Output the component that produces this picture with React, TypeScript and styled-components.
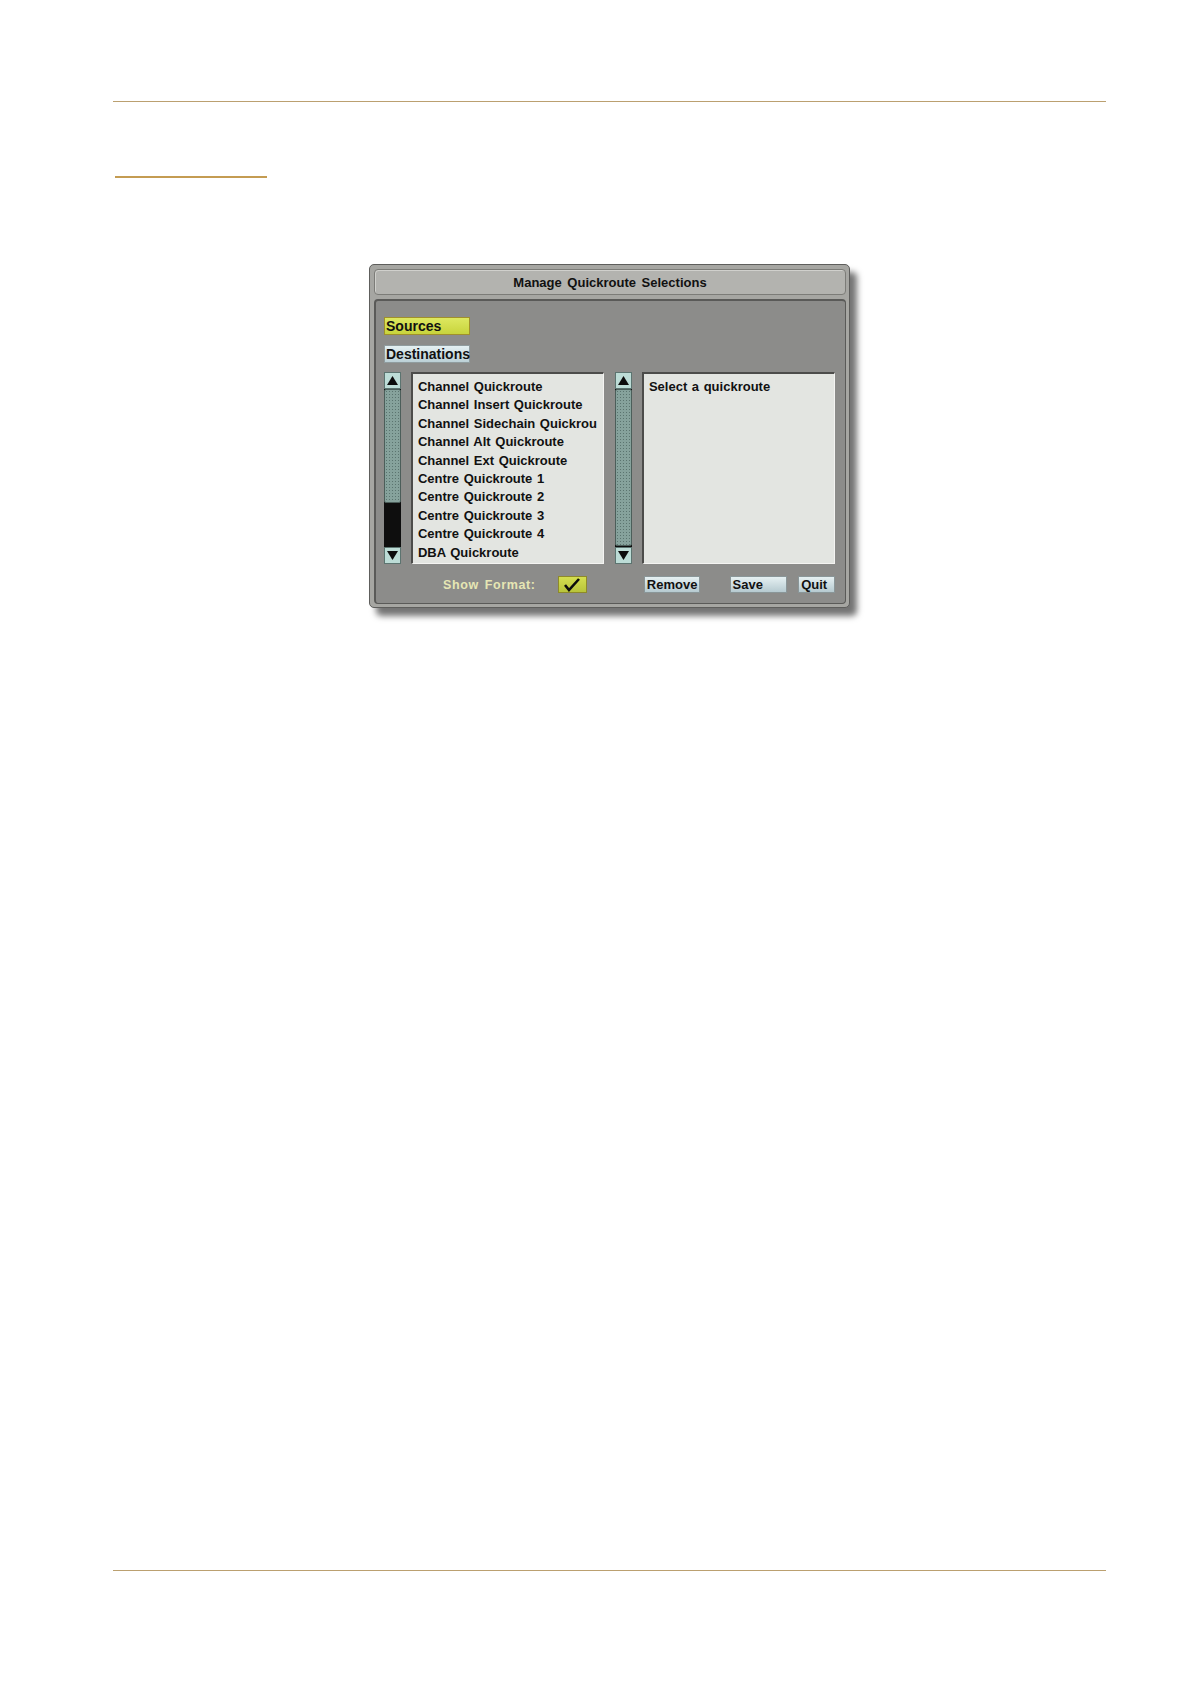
import React from "react"
import styled, { createGlobalStyle, css } from "styled-components"

const Global = createGlobalStyle`
    html, body {
        margin: 0;
        padding: 0;
        background: #ffffff;
    }
    body {
        font-family: "Liberation Sans", Arial, sans-serif;
    }
`

const Page = styled.div`
    width: 1191px;
    height: 1684px;
    box-sizing: border-box;
    padding: 101px 85px 113px 113px;
    display: flex;
    flex-direction: column;
`

const Rule = styled.div<{ $bottom?: boolean }>`
    height: 1px;
    background: #bba070;
    margin-top: ${(p) => (p.$bottom ? "auto" : "0")};
`

const SectionRule = styled.div`
    width: 152px;
    height: 2px;
    margin: 74px 0 0 2px;
    background: #c49c52;
`

const Dialog = styled.div`
    align-self: center;
    margin-top: 86px;
    width: 481px;
    height: 344px;
    box-sizing: border-box;
    padding: 4px 3px 3px 4px;
    background: #a6a6a2;
    border: 1px solid #5e5e5c;
    border-radius: 5px;
    box-shadow: 7px 8px 6px rgba(0, 0, 0, 0.55);
    display: flex;
    flex-direction: column;
    font-family: "Liberation Sans", Arial, sans-serif;
    font-weight: bold;
    color: #111;
`

const TitleBar = styled.div`
    height: 26px;
    box-sizing: border-box;
    border: 1px solid #7c7c78;
    border-radius: 4px;
    background: #b3b3af;
    box-shadow: inset 1px 1px 0 #d0d0cc;
    display: flex;
    align-items: center;
    justify-content: center;
    font-size: 13px;
    word-spacing: 2px;
`

const Body = styled.div`
    flex: 1;
    margin-top: 4px;
    box-sizing: border-box;
    background: #8c8c8a;
    border: 1px solid #5a5a58;
    border-top-width: 2px;
    border-left-width: 2px;
    border-radius: 4px;
    padding: 16px 10px 0 8px;
    display: flex;
    flex-direction: column;
`

const Tab = styled.div<{ $active?: boolean }>`
    width: 86px;
    height: 18px;
    box-sizing: border-box;
    padding-left: 1px;
    font-size: 14px;
    line-height: 17px;
    ${(p) =>
        p.$active
            ? css`
                  background: linear-gradient(#dde860, #c8d43c);
                  border: 1px solid #a0902c;
              `
            : css`
                  background: linear-gradient(#e4f0f2, #bcd0d6);
                  border: 1px solid #909c9e;
              `}
    & + & {
        margin-top: 10px;
    }
`

const Lists = styled.div`
    margin-top: 9px;
    display: flex;
    height: 192px;
`

const Scrollbar = styled.div<{ $gap: number }>`
    width: 17px;
    margin-left: ${(p) => p.$gap}px;
    display: flex;
    flex-direction: column;
    background: #0e0e0e;
`

const Arrow = styled.div`
    height: 17px;
    box-sizing: border-box;
    border: 1px solid #5c7470;
    background: #bcdcd6;
    display: flex;
    align-items: center;
    justify-content: center;
`

const Thumb = styled.div<{ $size: number }>`
    height: ${(p) => p.$size}px;
    box-sizing: border-box;
    border: 1px solid #4c5e5a;
    border-radius: 2px;
    background-color: #86a29c;
    background-image: radial-gradient(#5b746f 0.8px, transparent 1px);
    background-size: 3px 3px;
`

const Track = styled.div`
    flex: 1;
`

const ListBox = styled.div`
    width: 194px;
    margin-left: 10px;
    box-sizing: border-box;
    background: #e3e5e1;
    border-top: 2px solid #4c4c4a;
    border-left: 2px solid #4c4c4a;
    border-right: 1px solid #f4f4f2;
    border-bottom: 1px solid #f4f4f2;
    padding: 4px 0 0 5px;
    overflow: hidden;
    font-size: 13px;
`

const Item = styled.div`
    height: 18.4px;
    line-height: 18px;
    white-space: nowrap;
    overflow: hidden;
    word-spacing: 1px;
`

const Footer = styled.div`
    margin-top: 12px;
    display: flex;
    align-items: center;
    height: 17px;
`

const Label = styled.span`
    margin-left: 59px;
    width: 90px;
    white-space: nowrap;
    font-size: 12.5px;
    color: #e6e6b4;
    letter-spacing: 0.6px;
    word-spacing: 2px;
`

const Check = styled.div`
    margin-left: 25px;
    width: 29px;
    height: 17px;
    box-sizing: border-box;
    background: linear-gradient(#d4de50, #b8c43a);
    border: 1px solid #8e8a2a;
    display: flex;
    align-items: center;
    justify-content: center;
`

const Button = styled.div<{ $width: number; $gap: number }>`
    width: ${(p) => p.$width}px;
    margin-left: ${(p) => p.$gap}px;
    height: 17px;
    box-sizing: border-box;
    padding-left: 2px;
    background: linear-gradient(#e6f0f2, #b6cad0);
    border: 1px solid #8a9698;
    font-size: 13px;
    line-height: 15px;
    white-space: nowrap;
`

const items = [
    "Channel Quickroute",
    "Channel Insert Quickroute",
    "Channel Sidechain Quickrou",
    "Channel Alt Quickroute",
    "Channel Ext Quickroute",
    "Centre Quickroute 1",
    "Centre Quickroute 2",
    "Centre Quickroute 3",
    "Centre Quickroute 4",
    "DBA Quickroute",
]

function Tri({ down }: { down?: boolean }) {
    return (
        <svg width="11" height="11" viewBox="0 0 11 11">
            <polygon points={down ? "0,1 11,1 5.5,10" : "5.5,1 11,10 0,10"} fill="#0c0c0c" />
        </svg>
    )
}

function Bar({ thumb, gap }: { thumb: number; gap: number }) {
    return (
        <Scrollbar $gap={gap}>
            <Arrow>
                <Tri />
            </Arrow>
            <Thumb $size={thumb} />
            <Track />
            <Arrow>
                <Tri down />
            </Arrow>
        </Scrollbar>
    )
}

export default function App() {
    return (
        <>
            <Global />
            <Page>
                <Rule />
                <SectionRule />
                <Dialog>
                    <TitleBar>Manage Quickroute Selections</TitleBar>
                    <Body>
                        <Tab $active>Sources</Tab>
                        <Tab>Destinations</Tab>
                        <Lists>
                            <Bar thumb={114} gap={0} />
                            <ListBox>
                                {items.map((t) => (
                                    <Item key={t}>{t}</Item>
                                ))}
                            </ListBox>
                            <Bar thumb={157} gap={11} />
                            <ListBox>
                                <Item>Select a quickroute</Item>
                            </ListBox>
                        </Lists>
                        <Footer>
                            <Label>Show Format:</Label>
                            <Check>
                                <svg width="16" height="14" viewBox="0 0 16 14">
                                    <path d="M1 7 L5 12 L15 1" stroke="#0c0c0c" strokeWidth="2.6" fill="none" />
                                </svg>
                            </Check>
                            <Button $width={56} $gap={57}>Remove</Button>
                            <Button $width={58} $gap={30}>Save</Button>
                            <Button $width={37} $gap={11}>Quit</Button>
                        </Footer>
                    </Body>
                </Dialog>
                <Rule $bottom />
            </Page>
        </>
    )
}
